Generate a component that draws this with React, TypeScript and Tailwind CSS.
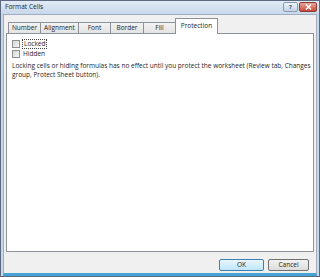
import React from "react";

const TABS = [
  { label: "Number", w: "w-[33px]" },
  { label: "Alignment", w: "w-[39px]" },
  { label: "Font", w: "w-[33px]" },
  { label: "Border", w: "w-[34px]" },
  { label: "Fill", w: "w-[33px]" },
];

const Checkbox = () => (
  <span className="w-[8px] h-[8px] border border-[#8e8f8f] bg-gradient-to-br from-[#d6d6d6] to-[#f7f7f7] shrink-0" />
);

export default function App() {
  return (
    <div className="w-[320px] h-[277px] bg-[#c7d7ea] border border-[#5b6a7f] flex flex-col font-['Open_Sans',sans-serif] text-[#1e1e1e] leading-none">
      {/* title bar */}
      <div className="h-[13px] flex items-start pl-[4px] pr-[2px] bg-gradient-to-b from-[#e1eaf5] to-[#c9d8ea]">
        <span className="text-[6.6px] mt-[3px]">Format Cells</span>
        <div className="ml-auto flex gap-[1px] mt-[1px]">
          <div className="w-[15px] h-[10px] border border-[#8a9bb0] rounded-[2px] bg-gradient-to-b from-[#eef3f9] to-[#c4d3e4] flex items-center justify-center text-[6px] font-bold text-[#44546a]">
            ?
          </div>
          <div className="w-[18px] h-[10px] border border-[#8c3a30] rounded-[2px] bg-gradient-to-b from-[#e4a79d] to-[#c8473a] flex items-center justify-center">
            <svg width="7" height="6" viewBox="0 0 7 6">
              <path d="M1 0.5 L6 5.5 M6 0.5 L1 5.5" stroke="#ffffff" strokeWidth="1.4" />
            </svg>
          </div>
        </div>
      </div>

      {/* client */}
      <div className="flex-1 mx-[2px] bg-[#f0f0f0] border border-[#9eadbf] border-b-[3px] border-b-[#45a2d2] flex flex-col pt-[3px] pl-[2px] pr-[2px]">
        {/* tabs */}
        <div className="h-[15px] flex items-end pl-[2px] text-[6.5px]">
          {TABS.map((t, i) => (
            <div
              key={t.label}
              className={`${t.w} h-[11px] border border-b-0 border-[#8d9198] bg-gradient-to-b from-[#f3f3f3] to-[#e3e3e3] flex items-center justify-center ${i > 0 ? "-ml-[1px]" : ""}`}
            >
              {t.label}
            </div>
          ))}
          <div className="relative z-10 -ml-[1px] -mb-[1px] w-[43px] h-[16px] border border-b-0 border-[#8d9198] bg-white flex items-start justify-center pt-[4px]">
            Protection
          </div>
        </div>

        {/* panel */}
        <div className="h-[219px] bg-white border border-[#8d9198] pl-[5px] pt-[5px] text-[6.5px]">
          <div className="h-[10px] flex items-center gap-[2px]">
            <Checkbox />
            <span className="border border-dotted border-[#444] px-[1px] py-[1px]">Locked</span>
          </div>
          <div className="h-[10px] flex items-center gap-[3px]">
            <Checkbox />
            <span>Hidden</span>
          </div>
          <p className="mt-[2px] leading-[9px]">
            Locking cells or hiding formulas has no effect until you protect the worksheet (Review tab, Changes group, Protect Sheet button).
          </p>
        </div>

        {/* buttons */}
        <div className="mt-[7px] flex justify-end gap-[4px] pr-[5px] text-[6.5px]">
          <button className="w-[45px] h-[12px] rounded-[2px] border border-[#3c7fb1] bg-gradient-to-b from-[#eaf6fd] to-[#bee6fd] flex items-center justify-center">
            OK
          </button>
          <button className="w-[41px] h-[12px] rounded-[2px] border border-[#707070] bg-gradient-to-b from-[#f2f2f2] to-[#dcdcdc] flex items-center justify-center">
            Cancel
          </button>
        </div>
      </div>
    </div>
  );
}
